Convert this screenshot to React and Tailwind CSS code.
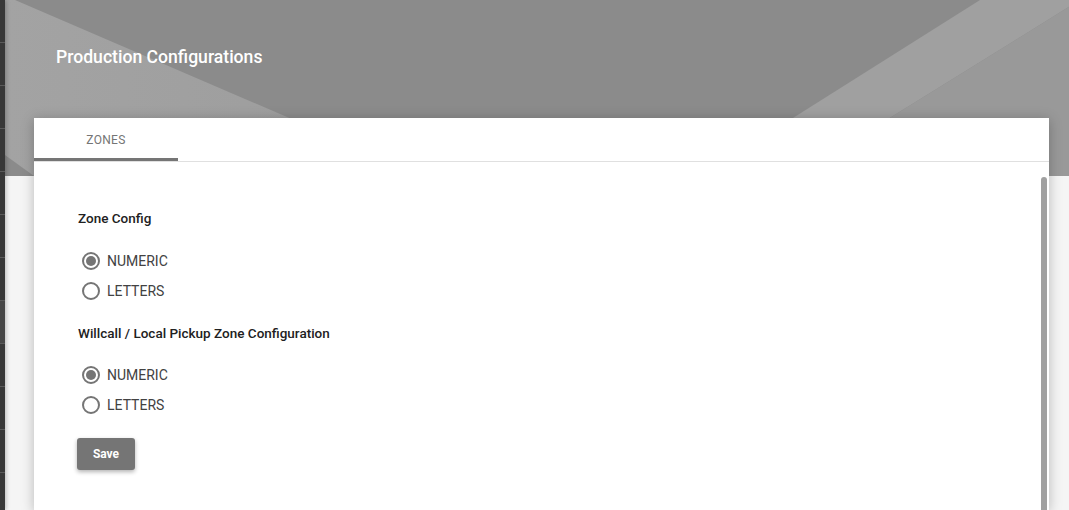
import React from 'react';

const segments = [0, 1, 2, 3, 4, 5, 6, 7, 8, 9, 10, 11];

function Radio({ checked, label }) {
  return (
    <label className="flex items-center h-[30px] ml-[4px] cursor-pointer">
      <span className="w-[18px] h-[18px] rounded-full border-2 border-[#757575] flex items-center justify-center">
        {checked && <span className="w-[10px] h-[10px] rounded-full bg-[#757575]"></span>}
      </span>
      <span className="ml-[7px] text-[14px] text-[#424242]">{label}</span>
    </label>
  );
}

function HeaderArt() {
  // diagonal bands drawn behind the page title
  return (
    <svg className="absolute inset-0" width="1064" height="176" viewBox="0 0 1064 176" preserveAspectRatio="none">
      <defs>
        <linearGradient id="bandL" x1="0" y1="0" x2="1" y2="0">
          <stop offset="0" stopColor="#a3a3a3" />
          <stop offset="1" stopColor="#9c9c9c" />
        </linearGradient>
      </defs>
      <rect width="1064" height="176" fill="#8b8b8b" />
      <polygon points="0,0 10,0 419,176 29,176 0,155" fill="url(#bandL)" />
      <polygon points="975,0 1075,0 791,176 696,176" fill="#a0a0a0" />
      <polygon points="1075,0 1064,0 1064,176 791,176" fill="#999999" />
    </svg>
  );
}

export default function App() {
  return (
    <div className="flex h-[510px] w-full overflow-hidden bg-[#f5f5f5]" style={{ fontFamily: 'Roboto, "Liberation Sans", sans-serif' }}>
      {/* Left rail */}
      <div className="w-[5px] shrink-0 flex flex-col bg-[#3a3a3a] shadow-[1px_0_4px_rgba(0,0,0,0.25)] z-20">
        {segments.map((i) => (
          <div key={i} className={`h-[43px] shrink-0 border-b border-[#5a5a5a] ${i === 7 ? 'bg-[#474747]' : 'bg-[#383838]'}`}></div>
        ))}
      </div>

      <div className="flex-1 flex flex-col min-w-0">
        {/* Header */}
        <div className="relative h-[176px] shrink-0 overflow-hidden">
          <HeaderArt />
          <h1 className="relative pl-[51px] pt-[45px] text-[17.6px] font-medium text-white leading-[24px]">Production Configurations</h1>
        </div>

        {/* Card */}
        <div className="relative z-10 mt-[-58px] ml-[29px] mr-[20px] flex-1 bg-white shadow-[0_2px_12px_rgba(0,0,0,0.25)] flex flex-col">
          <div className="flex border-b border-[#e0e0e0] h-[44px] shrink-0">
            <div className="w-[144px] h-[43px] flex items-center justify-center border-b-[3px] border-[#757575] pt-[3px]">
              <span className="text-[12px] text-[#757575] uppercase tracking-[0.3px]">Zones</span>
            </div>
          </div>

          <div className="flex flex-1 min-h-0">
            <div className="flex-1 pl-[44px] pt-[48px]">
              <h3 className="text-[13.5px] font-medium text-[#212121] leading-[16px]">Zone Config</h3>
              <div className="mt-[20px] flex flex-col">
                <Radio checked label="NUMERIC" />
                <Radio label="LETTERS" />
              </div>

              <h3 className="mt-[19px] text-[13.5px] font-medium text-[#212121] leading-[16px]">Willcall / Local Pickup Zone Configuration</h3>
              <div className="mt-[19px] flex flex-col">
                <Radio checked label="NUMERIC" />
                <Radio label="LETTERS" />
              </div>

              <button className="mt-[18px] ml-[-1px] w-[58px] h-[32px] rounded-[3px] bg-[#757575] text-white text-[12px] font-bold shadow-[0_2px_4px_rgba(0,0,0,0.3)]">
                Save
              </button>
            </div>

            {/* Scrollbar */}
            <div className="w-[6px] mr-[2px] pt-[15px] flex">
              <div className="flex-1 bg-[#a0a0a0] rounded-t-[3px]"></div>
            </div>
          </div>
        </div>
      </div>
    </div>
  );
}
